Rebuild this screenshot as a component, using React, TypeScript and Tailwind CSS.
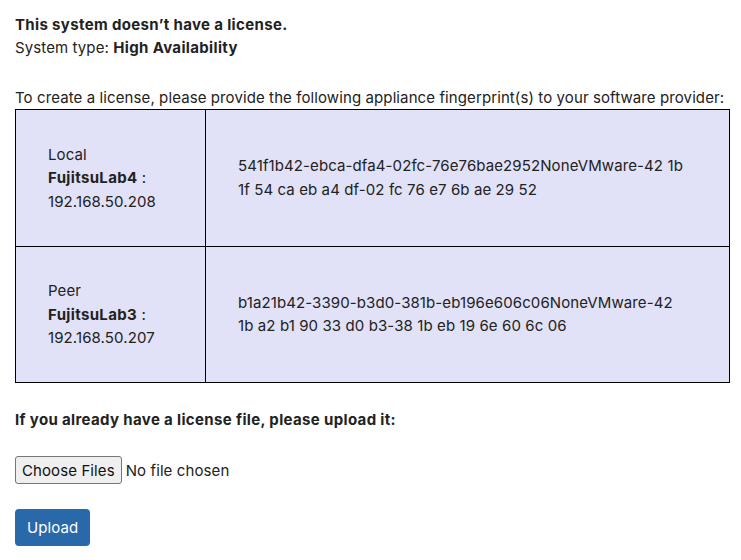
import React from "react";

export default function App() {
  return (
    <div
      className="px-[15px] pt-[13px] text-[15px] leading-[23px] tracking-[0.1px] text-[#222222] bg-white min-h-[560px]"
      style={{ fontFamily: "Inter, 'Noto Sans', sans-serif" }}
    >
      <div className="font-bold tracking-[0.35px]">This system doesn’t have a license.</div>
      <div>
        System type: <span className="font-bold tracking-[0.35px]">High Availability</span>
      </div>
      <div className="mt-[27px]">
        To create a license, please provide the following appliance fingerprint(s) to your software provider:
      </div>
      <table className="w-[715px] border-collapse border border-black bg-[#e1e1f7] leading-[23.5px]">
        <tbody>
          <tr>
            <td className="w-[190px] border border-black px-[32px] py-[32.5px] align-middle">
              <div>Local</div>
              <div>
                <span className="font-bold tracking-[0.35px]">FujitsuLab4</span> :
              </div>
              <div>192.168.50.208</div>
            </td>
            <td className="border border-black px-[32px] py-[32.5px] align-middle">
              541f1b42-ebca-dfa4-02fc-76e76bae2952NoneVMware-42 1b
              <br />
              1f 54 ca eb a4 df-02 fc 76 e7 6b ae 29 52
            </td>
          </tr>
          <tr>
            <td className="w-[190px] border border-black px-[32px] py-[32.5px] align-middle">
              <div>Peer</div>
              <div>
                <span className="font-bold tracking-[0.35px]">FujitsuLab3</span> :
              </div>
              <div>192.168.50.207</div>
            </td>
            <td className="border border-black px-[32px] py-[32.5px] align-middle">
              b1a21b42-3390-b3d0-381b-eb196e606c06NoneVMware-42
              <br />
              1b a2 b1 90 33 d0 b3-38 1b eb 19 6e 60 6c 06
            </td>
          </tr>
        </tbody>
      </table>
      <div className="mt-[25px] font-bold tracking-[0.35px]">
        If you already have a license file, please upload it:
      </div>
      <div className="mt-[25px] flex items-center h-[28px]">
        <span className="h-[28px] flex items-center border border-[#767676] bg-[#efefef] rounded-[3px] px-[6px] text-[#111]">
          Choose Files
        </span>
        <span className="ml-[4px]">No file chosen</span>
      </div>
      <div className="mt-[25px]">
        <button className="h-[37px] px-[12px] rounded-[4px] bg-[#2a69a9] text-white text-[15px] tracking-[0.1px]">
          Upload
        </button>
      </div>
    </div>
  );
}
